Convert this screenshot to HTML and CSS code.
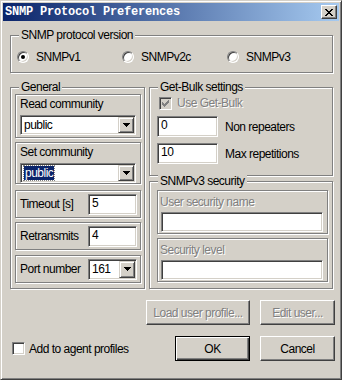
FILE: index.html
```html
<!DOCTYPE html>
<html lang="en">
<head>
  <meta charset="UTF-8" />
  <title>SNMP Protocol Preferences</title>
  <link rel="stylesheet" href="styles.css">
</head>
<body>
  <div class="window">
    <div class="titlebar">
      <span class="title">SNMP Protocol Preferences</span>
      <span class="close-btn">
        <svg width="8" height="7" viewBox="0 0 8 7"><path d="M0 0h2v1h1v1h2v-1h1v-1h2v1h-1v1h-1v1h-1v1h1v1h1v1h1v1h-2v-1h-1v-1h-2v1h-1v1h-2v-1h1v-1h1v-1h1v-1h-1v-1h-1v-1h-1z" fill="#000"/></svg>
      </span>
    </div>

    <div class="client">
      <div class="group proto">
        <span class="group-title">SNMP protocol version</span>
        <label class="radio-item"><span class="radio checked"></span>SNMPv1</label>
        <label class="radio-item"><span class="radio"></span>SNMPv2c</label>
        <label class="radio-item"><span class="radio"></span>SNMPv3</label>
      </div>

      <div class="columns">
        <div class="group general">
          <span class="group-title">General</span>

          <div class="subbox stack read-box">
            <div class="sublabel">Read community</div>
            <div class="field combo wide">
              <span class="combo-text">public</span>
              <span class="drop"><svg width="7" height="4" viewBox="0 0 7 4"><path d="M0 0h7v1h-1v1h-1v1h-1v1h-1v-1h-1v-1h-1v-1h-1z"/></svg></span>
            </div>
          </div>

          <div class="subbox stack set-box">
            <div class="sublabel">Set community</div>
            <div class="field combo wide">
              <span class="combo-text"><span class="selected">public</span></span>
              <span class="drop"><svg width="7" height="4" viewBox="0 0 7 4"><path d="M0 0h7v1h-1v1h-1v1h-1v1h-1v-1h-1v-1h-1v-1h-1z"/></svg></span>
            </div>
          </div>

          <div class="subbox line timeout-box">
            <span>Timeout [s]</span>
            <span class="field small">5</span>
          </div>

          <div class="subbox line retrans-box">
            <span>Retransmits</span>
            <span class="field small">4</span>
          </div>

          <div class="subbox line port-box">
            <span>Port number</span>
            <div class="field combo small">
              <span class="combo-text">161</span>
              <span class="drop"><svg width="7" height="4" viewBox="0 0 7 4"><path d="M0 0h7v1h-1v1h-1v1h-1v1h-1v-1h-1v-1h-1v-1h-1z"/></svg></span>
            </div>
          </div>
        </div>

        <div class="right-col">
          <div class="group bulk">
            <span class="group-title">Get-Bulk settings</span>
            <label class="check-row disabled">
              <span class="checkbox off">
                <svg width="7" height="7" viewBox="0 0 7 7"><path d="M6 0h1v3h-1v1h-1v1h-1v1h-1v1h-1v-1h-1v-1h-1v-3h1v1h1v1h1v-1h1v-1h1v-1h1z" fill="#808080"/></svg>
              </span>
              Use Get-Bulk
            </label>
            <div class="bulk-row">
              <span class="field num">0</span>
              <span>Non repeaters</span>
            </div>
            <div class="bulk-row">
              <span class="field num">10</span>
              <span>Max repetitions</span>
            </div>
          </div>

          <div class="group v3">
            <span class="group-title">SNMPv3 security</span>
            <div class="subbox v3-box">
              <div class="sublabel disabled">User security name</div>
              <span class="field long"></span>
            </div>
            <div class="subbox v3-box level-box">
              <div class="sublabel disabled">Security level</div>
              <span class="field long"></span>
            </div>
          </div>
        </div>
      </div>

      <div class="btn-row">
        <button class="btn load" disabled>Load user profile...</button>
        <button class="btn" disabled>Edit user...</button>
      </div>

      <div class="bottom-row">
        <label class="check-row agent">
          <span class="checkbox"></span>
          Add to agent profiles
        </label>
        <span class="spacer"></span>
        <button class="btn default">OK</button>
        <button class="btn">Cancel</button>
      </div>
    </div>
  </div>
</body>
</html>
```

FILE: styles.css
```css
* {
  margin: 0;
  padding: 0;
  box-sizing: border-box;
}

body {
  background: #d4d0c8;
  font-family: "Liberation Sans", Arial, sans-serif;
  font-size: 12px;
  letter-spacing: -0.5px;
  white-space: nowrap;
  color: #000;
}

/* Window frame */
.window {
  width: 342px;
  height: 380px;
  padding: 2px;
  background: #d4d0c8;
  border: 1px solid;
  border-color: #d4d0c8 #404040 #404040 #d4d0c8;
  box-shadow: inset 1px 1px #fff, inset -1px -1px #808080;
}

.titlebar {
  height: 18px;
  display: flex;
  align-items: center;
  justify-content: space-between;
  padding: 0 2px;
  background: linear-gradient(90deg, #0a246a, #a6caf0);
}

.title {
  font-family: "Liberation Mono", monospace;
  font-weight: bold;
  font-size: 12px;
  letter-spacing: -0.2px;
  color: #fff;
}

.close-btn {
  width: 16px;
  height: 14px;
  display: flex;
  align-items: center;
  justify-content: center;
  background: #d4d0c8;
  border: 1px solid;
  border-color: #fff #404040 #404040 #fff;
  box-shadow: inset -1px -1px #808080;
}

.client {
  padding: 14px 4px 0 7px;
}

/* Etched group frames */
.group,
.subbox {
  position: relative;
  border: 1px solid #808080;
  box-shadow: inset 1px 1px #fff, 1px 1px #fff;
}

.group-title {
  position: absolute;
  top: -8px;
  left: 8px;
  padding: 0 2px;
  line-height: 14px;
  background: #d4d0c8;
}

.proto {
  width: 323px;
  height: 38px;
  display: flex;
  padding: 14px 0 0 6px;
}

.radio-item {
  width: 105px;
  display: flex;
  align-items: center;
  gap: 7px;
  line-height: 14px;
  height: 14px;
}

.radio {
  position: relative;
  width: 12px;
  height: 12px;
  border-radius: 50%;
  background: #fff;
  border: 1px solid;
  border-color: #808080 #fff #fff #808080;
  box-shadow: inset 1px 1px #404040, inset -1px -1px #d4d0c8;
}

.radio.checked::after {
  content: "";
  position: absolute;
  top: 3px;
  left: 3px;
  width: 4px;
  height: 4px;
  border-radius: 50%;
  background: #000;
}

.columns {
  display: flex;
  align-items: flex-start;
  gap: 4px;
  margin-top: 14px;
}

/* General */
.general {
  width: 135px;
  height: 202px;
  padding: 6px 0 0 4px;
}

.subbox {
  width: 126px;
}

.stack {
  padding: 2px 0 0 4px;
}

.sublabel {
  line-height: 14px;
}

.read-box { height: 44px; }
.set-box { height: 42px; margin-top: 4px; }

.stack .combo {
  margin-top: 4px;
}

.line {
  height: 28px;
  display: flex;
  align-items: center;
  justify-content: space-between;
  padding: 0 3px 0 4px;
}

.timeout-box { margin-top: 6px; }
.retrans-box { margin-top: 4px; }
.port-box { margin-top: 5px; }

/* Sunken fields */
.field {
  display: block;
  height: 20px;
  line-height: 17px;
  padding-left: 3px;
  background: #fff;
  border: 1px solid;
  border-color: #808080 #fff #fff #808080;
  box-shadow: inset 1px 1px #404040, inset -1px -1px #d4d0c8;
}

.combo {
  display: flex;
  padding: 1px;
}

.combo-text {
  flex: 1;
  padding-left: 2px;
  line-height: 16px;
}

.selected {
  background: #0a246a;
  color: #fff;
  outline: 1px dotted #808080;
  padding: 0 1px;
}

.drop {
  width: 16px;
  display: flex;
  align-items: center;
  justify-content: center;
  background: #d4d0c8;
  border: 1px solid;
  border-color: #d4d0c8 #404040 #404040 #d4d0c8;
  box-shadow: inset 1px 1px #fff, inset -1px -1px #808080;
}

.wide { width: 116px; }
.small { width: 49px; height: 21px; }
.num { width: 61px; height: 21px; }
.long { width: 162px; }

/* Right column */
.right-col {
  width: 184px;
  display: flex;
  flex-direction: column;
}

.bulk {
  height: 89px;
  padding: 8px 0 0 7px;
}

.check-row {
  display: flex;
  align-items: center;
  gap: 5px;
  height: 14px;
  line-height: 14px;
}

.bulk .check-row {
  margin-left: 2px;
}

.checkbox {
  width: 13px;
  height: 13px;
  display: flex;
  align-items: center;
  justify-content: center;
  background: #fff;
  border: 1px solid;
  border-color: #808080 #fff #fff #808080;
  box-shadow: inset 1px 1px #404040, inset -1px -1px #d4d0c8;
}

.checkbox.off {
  background: #d4d0c8;
}

.disabled {
  color: #808080;
  text-shadow: 1px 1px #fff;
}

.bulk-row {
  display: flex;
  align-items: center;
  gap: 7px;
  margin-top: 6px;
}

.v3 {
  height: 108px;
  margin-top: 5px;
  padding: 8px 0 0 7px;
}

.v3-box {
  width: 171px;
  height: 44px;
  padding: 4px 0 0 3px;
}

.v3-box .sublabel {
  margin-left: -1px;
}

.v3-box .field {
  margin-top: 3px;
}

.level-box {
  margin-top: 4px;
}

/* Buttons */
.btn-row {
  display: flex;
  justify-content: flex-end;
  gap: 10px;
  margin-top: 11px;
}

.btn {
  width: 75px;
  height: 25px;
  font: inherit;
  letter-spacing: inherit;
  color: #000;
  background: #d4d0c8;
  border: 1px solid;
  border-color: #fff #404040 #404040 #fff;
  box-shadow: inset -1px -1px #808080;
}

.btn:disabled {
  color: #808080;
  text-shadow: 1px 1px #fff;
}

.btn.load {
  width: 104px;
}

.btn.default {
  border-color: #000;
  box-shadow: inset 1px 1px #fff, inset -1px -1px #404040, inset -2px -2px #808080;
}

.bottom-row {
  display: flex;
  align-items: center;
  gap: 10px;
  height: 25px;
  margin-top: 11px;
}

.agent {
  margin-left: 2px;
  gap: 4px;
}

.spacer {
  flex: 1;
}
```
